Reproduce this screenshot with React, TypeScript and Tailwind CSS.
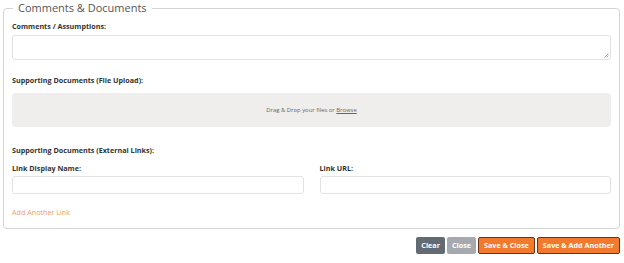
import React from "react";

export default function App() {
  const font = { fontFamily: '"Open Sans", "Liberation Sans", sans-serif' };
  return (
    <div className="w-[624px] h-[263px] bg-white text-[#333]" style={font}>
      <div className="pl-[3px] pr-[4px]">
        <fieldset className="border border-[#d4d4d4] rounded-[4px] px-[8px] pb-[10px] pt-0">
          <legend className="ml-[1px] px-[5px] text-[11px] leading-[16px] text-[#555]">Comments &amp; Documents</legend>
          <div className="text-[7.2px] font-bold leading-[11px] mt-[5px]">Comments / Assumptions:</div>
          <div className="mt-[3px] h-[25px] border border-[#e2e2e2] rounded-[3px] relative">
            <svg className="absolute right-[1px] bottom-[1px]" width="5" height="5" viewBox="0 0 5 5">
              <path d="M4.5 0.5 L0.5 4.5 M4.5 2.5 L2.5 4.5" stroke="#999" strokeWidth="0.8" />
            </svg>
          </div>
          <div className="text-[7.2px] font-bold leading-[11px] mt-[15px]">Supporting Documents (File Upload):</div>
          <div className="mt-[7px] h-[34px] bg-[#efeeec] rounded-[4px] flex items-center justify-center text-[5.9px] text-[#666]">
            <span>Drag &amp; Drop your files or <span className="underline">Browse</span></span>
          </div>
          <div className="text-[7.2px] font-bold leading-[11px] mt-[18px]">Supporting Documents (External Links):</div>
          <div className="grid grid-cols-2 gap-x-[16px] mt-[7px]">
            <div>
              <div className="text-[7.2px] font-bold leading-[11px]">Link Display Name:</div>
              <div className="mt-[2px] h-[18px] border border-[#e2e2e2] rounded-[3px]" />
            </div>
            <div>
              <div className="text-[7.2px] font-bold leading-[11px]">Link URL:</div>
              <div className="mt-[2px] h-[18px] border border-[#e2e2e2] rounded-[3px]" />
            </div>
          </div>
          <div className="mt-[13px] text-[7.2px] leading-[11px] text-[#f39a66]">Add Another Link</div>
        </fieldset>
      </div>
      <div className="flex justify-end gap-[2px] pr-[4px] mt-[8px]">
        <button className="h-[17px] px-[5px] rounded-[2px] bg-[#626a73] text-white text-[7.2px] font-bold">Clear</button>
        <button className="h-[17px] px-[5px] rounded-[2px] bg-[#a6aaae] text-white text-[7.2px] font-bold">Close</button>
        <button className="h-[17px] px-[5px] rounded-[2px] bg-[#f27a2e] border border-[#6b3414] text-white text-[7.2px] font-bold">Save &amp; Close</button>
        <button className="h-[17px] px-[5px] rounded-[2px] bg-[#f27a2e] border border-[#6b3414] text-white text-[7.2px] font-bold">Save &amp; Add Another</button>
      </div>
    </div>
  );
}
